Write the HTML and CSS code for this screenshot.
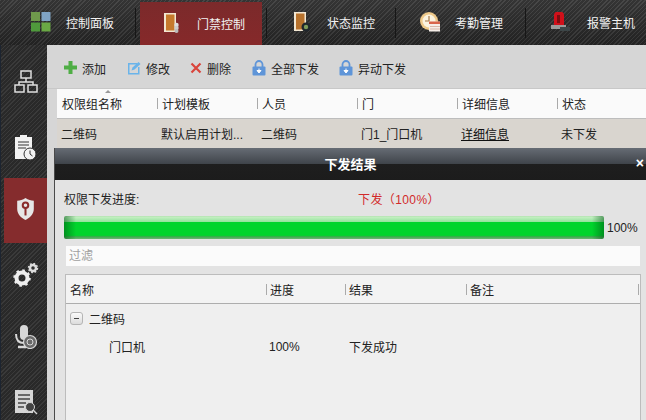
FILE: index.html
```html
<!DOCTYPE html>
<html lang="zh-CN">
<head>
<meta charset="utf-8">
<title>门禁控制</title>
<link rel="stylesheet" href="styles.css">
</head>
<body>
<div class="app">
  <nav class="topnav">
    <div class="tab tab-first">
      <svg class="tab-icon" viewBox="0 0 20 20"><rect x="0" y="0" width="9" height="9" fill="#6f9a4c"/><rect x="10.500" y="0" width="9" height="9" fill="#7fa3c4"/><rect x="0" y="10.500" width="9" height="9" fill="#4f9a3c"/><rect x="10.500" y="10.500" width="9" height="9" fill="#6aa845"/></svg>
      <span>控制面板</span>
    </div>
    <i class="sep"></i>
    <div class="tab tab-active">
      <svg class="tab-icon" viewBox="0 0 20 20"><rect x="2" y="0" width="12" height="19" fill="#f3e7d2"/><rect x="4" y="1.500" width="8.500" height="16" fill="#c67a2c"/><circle cx="14.500" cy="12" r="2.200" fill="#ddd"/><circle cx="14.500" cy="15" r="2.200" fill="#ccc"/><circle cx="14.500" cy="18" r="2" fill="#bbb"/></svg>
      <span>门禁控制</span>
    </div>
    <i class="sep sep-b"></i>
    <div class="tab tab-c">
      <svg class="tab-icon" viewBox="0 0 20 20"><rect x="2" y="0" width="12" height="19" fill="#f3e7d2"/><rect x="4" y="1.500" width="8.500" height="16" fill="#b8722c"/><circle cx="14" cy="15" r="4.500" fill="#20262c"/><circle cx="14" cy="15" r="2.200" fill="#7c9a5a"/></svg>
      <span>状态监控</span>
    </div>
    <i class="sep"></i>
    <div class="tab tab-d">
      <svg class="tab-icon" viewBox="0 0 20 20"><circle cx="9" cy="9" r="9" fill="#eec98a"/><circle cx="9" cy="9" r="6.500" fill="#fbf3df"/><path d="M9 4v5H5" stroke="#a5794a" stroke-width="1.200" fill="none"/><rect x="9" y="9.500" width="12" height="10" fill="#f6eee8"/><rect x="9" y="9.500" width="12" height="2.500" fill="#d9654a"/><path d="M10 14.500h10M10 17h10" stroke="#d8b8a8" stroke-width="1"/></svg>
      <span>考勤管理</span>
    </div>
    <i class="sep"></i>
    <div class="tab tab-e">
      <svg class="tab-icon" viewBox="0 0 22 20"><path d="M5 3a5 4 0 0 1 10 0v10H5z" fill="#d0101a"/><rect x="8" y="3" width="3" height="8" fill="#7c0c10"/><path d="M2 13h15v4H2z" fill="#9a9a9a"/><rect x="11" y="15" width="10" height="4" fill="#3c4648"/></svg>
      <span>报警主机</span>
    </div>
  </nav>

  <div class="body">
    <aside class="sidebar">
      <div class="side-item side-net">
        <svg viewBox="0 0 24 24" width="24" height="24" fill="none" stroke="#dedede" stroke-width="1.500"><rect x="7" y="1" width="10" height="7"/><path d="M12 8v4M5 15v-3h14v3"/><rect x="1" y="15" width="9" height="7"/><rect x="14" y="15" width="9" height="7"/></svg>
      </div>
      <div class="side-item side-plan">
        <svg viewBox="0 0 24 26" width="24" height="26"><path d="M1 3h5V1h7v2h5v14H12v8H1z" fill="#f2f2f2"/><path d="M4 8h11M4 11h11M4 14h8" stroke="#333" stroke-width="1"/><circle cx="16" cy="20" r="6" fill="#f2f2f2" stroke="#333"/><path d="M16 16.500V20l2.500 2" stroke="#333" fill="none"/></svg>
      </div>
      <div class="side-item side-active">
        <svg viewBox="0 0 20 26" width="19" height="24"><path d="M10 1c3 2 6 3 9 3v9c0 6-5 10-9 12-4-2-9-6-9-12V4c3 0 6-1 9-3z" fill="#e6e6e6"/><circle cx="10" cy="9" r="3" fill="none" stroke="#8a2c2c" stroke-width="2.200"/><path d="M10 12v8" stroke="#8a2c2c" stroke-width="2.200"/></svg>
      </div>
      <div class="side-item side-gear">
        <svg viewBox="0 0 26 24" width="26" height="24"><circle cx="9" cy="15" r="5.500" fill="none" stroke="#eee" stroke-width="4"/><circle cx="9" cy="15" r="7.500" fill="none" stroke="#eee" stroke-width="2.500" stroke-dasharray="2.500 3.400"/><circle cx="20" cy="5" r="3" fill="none" stroke="#ddd" stroke-width="2.500"/><circle cx="20" cy="5" r="4.500" fill="none" stroke="#ddd" stroke-width="1.500" stroke-dasharray="1.800 1.700"/></svg>
      </div>
      <div class="side-item side-mic">
        <svg viewBox="0 0 24 24" width="24" height="24"><rect x="6" y="0" width="8" height="15" rx="4" fill="#d8d8d8"/><path d="M2 9c0 6 3 9 8 9" fill="none" stroke="#d8d8d8" stroke-width="2"/><path d="M4 22h8" stroke="#d8d8d8" stroke-width="2.500"/><circle cx="16" cy="17" r="6.500" fill="#6a6a6a" stroke="#d8d8d8" stroke-width="1.200"/><circle cx="16" cy="17" r="3" fill="none" stroke="#d8d8d8"/></svg>
      </div>
      <div class="side-item side-doc">
        <svg viewBox="0 0 24 26" width="24" height="26"><rect x="1" y="1" width="18" height="23" fill="#d6d6d6"/><path d="M4 6h12M4 10h12M4 14h8M4 18h6" stroke="#444" stroke-width="1.500"/><circle cx="16" cy="18" r="4.500" fill="#444" stroke="#d6d6d6"/><path d="M19 21l4 4" stroke="#d6d6d6" stroke-width="1.500"/></svg>
      </div>
    </aside>

    <main class="main">
      <div class="toolbar">
        <div class="tool"><svg class="ic-plus" viewBox="0 0 13 13"><path d="M4.500 0h4v4.500H13v4H8.500V13h-4V8.500H0v-4h4.500z" fill="#4fae45"/></svg>添加</div>
        <div class="tool tool-wide"><svg class="ic-14" viewBox="0 0 14 14"><path d="M1 2h9v1.500H2.500v8.500h8.500V6H12.500v7.500H1z" fill="#6ab4ea"/><path d="M4.500 9.500l1-3L11.500 1 13.500 3 7.500 8.500z" fill="#6ab4ea"/></svg>修改</div>
        <div class="tool"><svg class="ic-12" viewBox="0 0 12 12"><path d="M1.500 1.500l9 9M10.500 1.500l-9 9" stroke="#d9453c" stroke-width="2.200"/></svg>删除</div>
        <div class="tool tool-wide"><svg class="ic-14" viewBox="0 0 14 16"><path d="M3.500 7V4.500a3.500 3.500 0 0 1 7 0V7" fill="none" stroke="#5f95d8" stroke-width="1.800"/><rect x="0.500" y="6.500" width="13" height="9" rx="1" fill="#5f95d8"/><path d="M7 8.500v3M5 10.500l2 2.500 2-2.500z" stroke="#fff" fill="#fff"/></svg>全部下发</div>
        <div class="tool"><svg class="ic-14" viewBox="0 0 14 16"><path d="M3.500 7V4.500a3.500 3.500 0 0 1 7 0V7" fill="none" stroke="#5f95d8" stroke-width="1.800"/><rect x="0.500" y="6.500" width="13" height="9" rx="1" fill="#5f95d8"/><path d="M7 8.500v3M5 10.500l2 2.500 2-2.500z" stroke="#fff" fill="#fff"/></svg>异动下发</div>
      </div>

      <div class="grid">
        <div class="grid-head">
          <div class="gh-cell gh-first">权限组名称<i class="sort"></i></div>
          <div class="gh-cell">计划模板</div>
          <div class="gh-cell">人员</div>
          <div class="gh-cell">门</div>
          <div class="gh-cell">详细信息</div>
          <div class="gh-cell">状态</div>
        </div>
        <div class="grid-row">
          <div>二维码</div>
          <div>默认启用计划...</div>
          <div>二维码</div>
          <div>门1_门口机</div>
          <div class="link">详细信息</div>
          <div>未下发</div>
        </div>
      </div>

      <section class="modal">
        <header class="modal-title">
          <span>下发结果</span>
          <span class="modal-close">×</span>
        </header>
        <div class="modal-body">
          <div class="progress-label">
            <span class="pl-name">权限下发进度:</span>
            <span class="pl-value">下发（100%）</span>
          </div>
          <div class="progress-row">
            <div class="bar"></div>
            <span class="bar-pct">100%</span>
          </div>
          <input class="filter" type="text" placeholder="过滤">
          <div class="tree">
            <div class="tree-head">
              <div>名称</div>
              <div class="th-sep">进度</div>
              <div class="th-sep">结果</div>
              <div class="th-sep th-last">备注</div>
            </div>
            <div class="tree-group"><i class="toggle"></i>二维码</div>
            <div class="tree-row">
              <div class="tree-name">门口机</div>
              <div class="tree-pct">100%</div>
              <div class="tree-result">下发成功</div>
              <div></div>
            </div>
          </div>
        </div>
      </section>
    </main>
  </div>
</div>
</body>
</html>
```

FILE: styles.css
```css
* { box-sizing: border-box; }

html, body {
  margin: 0;
  height: 100%;
  overflow: hidden;
}

body {
  font-family: "Liberation Sans", "Noto Sans CJK SC", sans-serif;
  font-size: 12px;
  color: #222;
  background: #2c2c2c;
}

.app {
  width: 646px;
  height: 420px;
  display: flex;
  flex-direction: column;
  overflow: hidden;
}

/* top navigation */
.topnav {
  height: 45px;
  flex: none;
  display: flex;
  align-items: stretch;
  background:
    repeating-linear-gradient(135deg, rgba(255,255,255,.07) 0 1px, rgba(0,0,0,.1) 1px 3px),
    linear-gradient(#3a3a3a, #262626);
  color: #f2f2f2;
  font-size: 12px;
}

.tab {
  display: flex;
  align-items: center;
  gap: 15px;
  white-space: nowrap;
}

.tab-icon { width: 20px; height: 20px; flex: none; margin-top: -1px; }

.tab-first { padding-left: 31px; width: 135px; }

.tab-active {
  margin-left: 4px;
  margin-top: 2px;
  width: 122px;
  padding-left: 22px;
  background: linear-gradient(#7b2a2b, #86292a);
}

.tab-c { padding-left: 25px; width: 128px; }
.tab-d { padding-left: 24px; width: 129px; }
.tab-e { padding-left: 23px; gap: 16px; }
.tab-e .tab-icon { width: 22px; }

.sep {
  width: 1px;
  margin: 8px 0 7px;
  background: #161616;
  flex: none;
}

.sep-b { margin-left: 4px; }

/* body */
.body {
  flex: 1;
  display: flex;
  min-height: 0;
}

.sidebar {
  width: 47px;
  flex: none;
  padding-left: 3px;
  border-left: 1px solid #1c2430;
  background:
    repeating-linear-gradient(135deg, rgba(255,255,255,.06) 0 1px, rgba(0,0,0,.1) 1px 3px),
    #2e2e2e;
  display: flex;
  flex-direction: column;
}

.side-item {
  display: flex;
  align-items: center;
  justify-content: center;
  flex: none;
}

.side-net { height: 66px; padding-top: 8px; }
.side-plan { height: 67px; padding-top: 4px; }
.side-active { height: 65px; padding-bottom: 3px; background: #852c2d; }
.side-gear { height: 67px; padding-bottom: 4px; }
.side-mic { height: 65px; padding-bottom: 11px; }
.side-doc { height: 55px; padding-bottom: 2px; }

.main {
  flex: 1;
  position: relative;
  background: #d6d6d6;
  display: flex;
  flex-direction: column;
  min-width: 0;
}

.toolbar {
  height: 44px;
  flex: none;
  padding: 4px 0 0 17px;
  display: flex;
  align-items: center;
  gap: 20px;
  color: #222;
  border-bottom: 1px solid #c8c8c8;
}

.tool {
  display: flex;
  align-items: center;
  gap: 5px;
  white-space: nowrap;
}

.tool-wide { margin-left: 1px; }

.tool svg { margin-top: -2px; }

.ic-plus { width: 13px; height: 13px; }
.ic-14 { width: 14px; height: 16px; }
.ic-12 { width: 12px; height: 12px; }

.grid {
  margin-left: 10px;
}

.grid-head, .grid-row {
  display: grid;
  grid-template-columns: 100px 100px 100px 100px 100px 1fr;
}

.grid-head {
  height: 30px;
  background: #fafafa;
  border-bottom: 1px solid #bdbdbd;
  align-items: center;
}

.gh-cell {
  position: relative;
  padding-left: 4px;
  border-left: 1px solid #aaa;
  height: 11px;
  display: flex;
  align-items: center;
  white-space: nowrap;
}

.gh-first { border-left: 0; padding-left: 5px; }

.sort {
  position: absolute;
  left: 48px;
  top: -8px;
  border: 3px solid transparent;
  border-top: 0;
  border-bottom: 3px solid #999;
}

.grid-row {
  height: 29px;
  background: #d9d5cf;
  align-items: center;
}

.grid-row > div {
  padding-left: 4px;
  white-space: nowrap;
}

.link { text-decoration: underline; color: #111; }

/* dialog lying over the page */
.modal {
  position: absolute;
  left: 7px;
  top: 103px;
  right: 0;
  bottom: 0;
  display: flex;
  flex-direction: column;
  border-left: 1px solid #4a4a4a;
  background: #e3e3e3;
}

.modal-title {
  position: relative;
  height: 32px;
  flex: none;
  display: flex;
  align-items: center;
  justify-content: center;
  padding-bottom: 2px;
  color: #fff;
  font-size: 13px;
  font-weight: bold;
  background: linear-gradient(#666c74 0, #3f444a 50%, #1e1e1e 50%, #1c1c1c 100%);
}

.modal-close {
  position: absolute;
  right: 2px;
  top: 7px;
  font-size: 14px;
  line-height: 16px;
}

.modal-body {
  flex: 1;
  min-height: 0;
  padding: 13px 5px 0 9px;
  display: flex;
  flex-direction: column;
}

.progress-label {
  display: flex;
  height: 14px;
  line-height: 14px;
  margin-bottom: 9px;
}

.pl-name { width: 294px; flex: none; }
.pl-value { color: #d22a2a; letter-spacing: .4px; }

.progress-row {
  display: flex;
  align-items: center;
  height: 23px;
  gap: 3px;
}

.bar {
  width: 540px;
  height: 23px;
  flex: none;
  border-radius: 2px;
  background:
    linear-gradient(90deg, rgba(0,90,20,.55), rgba(0,90,20,0) 12px, rgba(0,90,20,0) 528px, rgba(0,90,20,.55)),
    linear-gradient(#a9dca9 0, #c5f0c2 4%, #92e29c 26%, #00d42c 28%, #00d42c 84%, #3ca84e 90%, #6cb874 100%);
}

.bar-pct { font-size: 12px; white-space: nowrap; }

.filter {
  display: block;
  flex: none;
  width: 574px;
  height: 20px;
  margin: 7px 0 8px 2px;
  padding: 0 3px;
  border: 0;
  background: #fbfbfb;
  font: inherit;
  outline: none;
}

.filter::placeholder { color: #a0a0a0; opacity: 1; }

.tree {
  flex: 1;
  min-height: 0;
  margin-left: 1px;
  width: 576px;
  background: #efefef;
  border: 1px solid #bcbcbc;
  border-bottom: 0;
}

.tree-head, .tree-row {
  display: grid;
  grid-template-columns: 200px 79px 121px 1fr;
  align-items: center;
}

.tree-head {
  height: 29px;
  background: #f3f3f3;
  border-bottom: 1px solid #adadad;
}

.tree-head > div {
  padding-left: 4px;
  height: 11px;
  display: flex;
  align-items: center;
  white-space: nowrap;
}

.tree-head > .th-sep { border-left: 1px solid #aaa; padding-left: 3px; }

.th-last { border-right: 1px solid #aaa; margin-right: 1px; }

.tree-group {
  height: 28px;
  display: flex;
  align-items: center;
  gap: 6px;
  padding-left: 4px;
}

.toggle {
  position: relative;
  width: 13px;
  height: 13px;
  flex: none;
  border: 1px solid #b5b5b5;
  border-radius: 3px;
  background: linear-gradient(#fafafa, #dcdcdc);
}

.toggle::after {
  content: "";
  position: absolute;
  left: 3px;
  top: 5px;
  width: 5px;
  height: 1px;
  background: #444;
}

.tree-row { height: 28px; }
.tree-row > div { padding-left: 3px; white-space: nowrap; }
.tree-row > .tree-name { padding-left: 43px; }
.tree-row > .tree-result { padding-left: 4px; }
.tree-pct { padding-top: 1px; }
```
